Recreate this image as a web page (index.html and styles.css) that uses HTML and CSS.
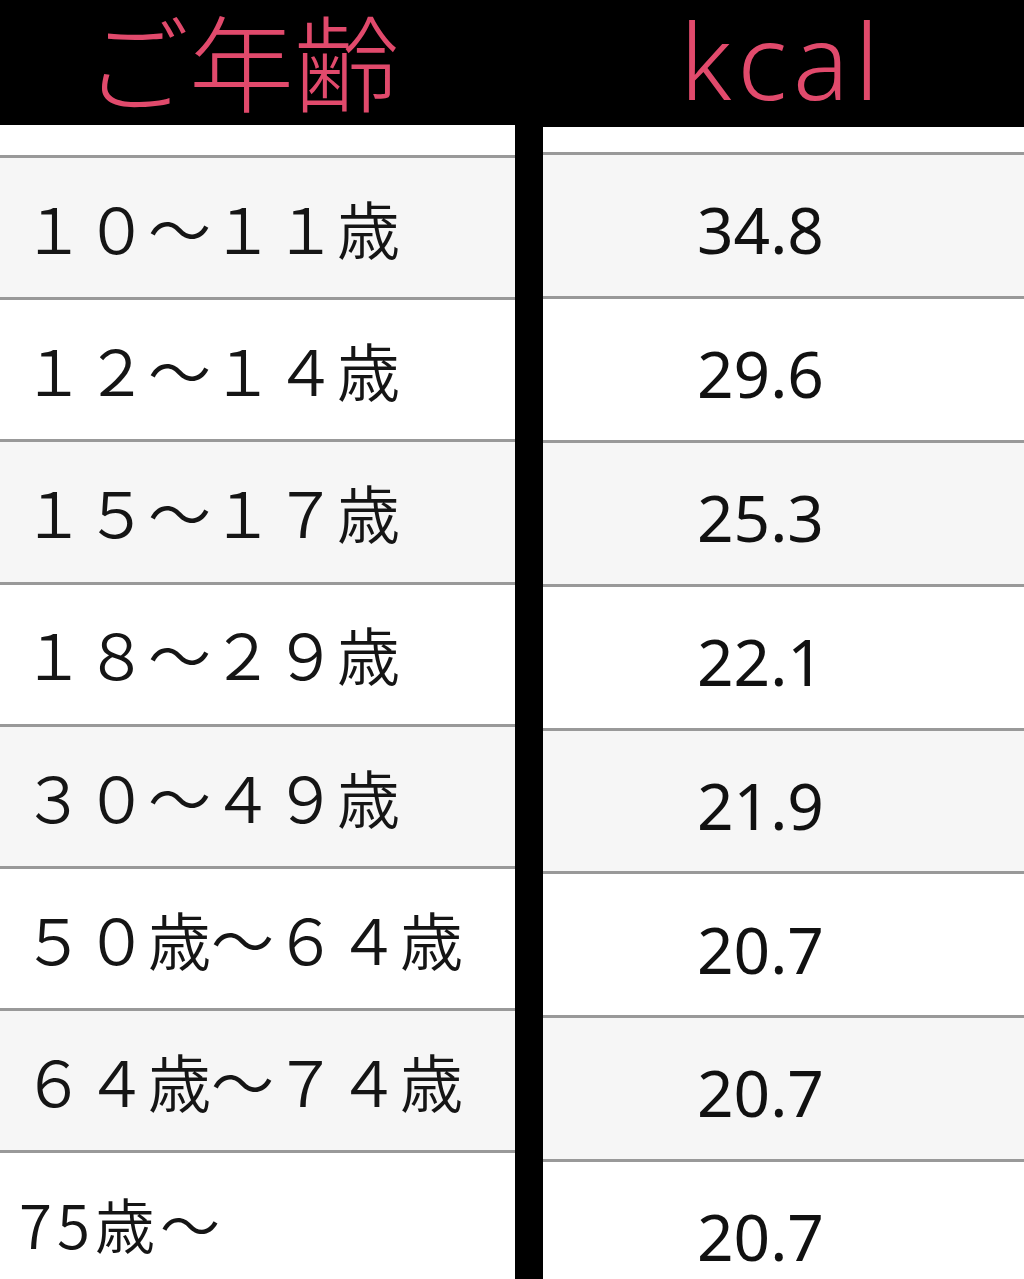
FILE: index.html
```html
<!DOCTYPE html>
<html lang="ja">
<head>
<meta charset="utf-8">
<link rel="stylesheet" href="styles.css">
</head>
<body>
<div class="table">
  <div class="col col-age">
    <div class="head"><span class="head-text jp">ご年齢</span></div>
    <div class="strip"></div>
    <div class="row alt"><span class="age">１０～１１歳</span></div>
    <div class="row"><span class="age">１２～１４歳</span></div>
    <div class="row alt"><span class="age">１５～１７歳</span></div>
    <div class="row"><span class="age">１８～２９歳</span></div>
    <div class="row alt"><span class="age">３０～４９歳</span></div>
    <div class="row"><span class="age">５０歳～６４歳</span></div>
    <div class="row alt"><span class="age">６４歳～７４歳</span></div>
    <div class="row"><span class="age small">75歳～</span></div>
  </div>
  <div class="col col-kcal">
    <div class="head"><span class="head-text en">kcal</span></div>
    <div class="strip"></div>
    <div class="row alt"><span class="num">34.8</span></div>
    <div class="row"><span class="num">29.6</span></div>
    <div class="row alt"><span class="num">25.3</span></div>
    <div class="row"><span class="num">22.1</span></div>
    <div class="row alt"><span class="num">21.9</span></div>
    <div class="row"><span class="num">20.7</span></div>
    <div class="row alt"><span class="num">20.7</span></div>
    <div class="row"><span class="num">20.7</span></div>
  </div>
</div>
</body>
</html>
```
FILE: styles.css
```css
html, body {
  margin: 0;
  padding: 0;
  background: #000;
}
body {
  width: 1024px;
  height: 1279px;
  overflow: hidden;
  font-family: "Noto Sans CJK JP", "Noto Sans", sans-serif;
}
.table {
  display: grid;
  grid-template-columns: 515px 481px;
  column-gap: 28px;
}
.col {
  display: flex;
  flex-direction: column;
}
.head {
  box-sizing: border-box;
  display: flex;
  align-items: center;
  justify-content: center;
  background: #000;
}
.col-age .head { height: 125px; padding: 0 32px 8px 0; }
.col-kcal .head { height: 127px; padding: 0 8px 6px 0; }
.head-text {
  color: #e14a6c;
  font-weight: 300;
  white-space: nowrap;
}
.head-text.jp {
  font-family: "Noto Sans CJK JP", sans-serif;
  font-size: 105px;
  line-height: 1.1;
}
.head-text.en {
  font-family: "Noto Sans", "Open Sans", sans-serif;
  font-size: 104px;
  line-height: 1.1;
  letter-spacing: 6px;
  margin-right: -6px;
}
.strip {
  background: #fff;
}
.col-age .strip { height: 30px; }
.col-kcal .strip { height: 25px; }
.row {
  box-sizing: border-box;
  border-top: 3px solid #999;
  background: #fff;
  display: flex;
  align-items: center;
  flex: none;
}
.row.alt { background: #f6f6f6; }
.col-age .row { height: 142.2px; padding-left: 22px; }
.col-kcal .row { height: 143.9px; padding-left: 154px; }
.age {
  font-family: "Noto Sans CJK JP", sans-serif;
  font-size: 63px;
  font-weight: 350;
  color: #151515;
  line-height: 1.2;
  margin-top: -2px;
}
.age.small {
  font-size: 60px;
  letter-spacing: 5px;
  margin-left: -3px;
  margin-top: 0;
}
.num {
  font-family: "Noto Sans", "Open Sans", sans-serif;
  font-size: 64px;
  color: #111;
  line-height: 1.2;
  margin-top: 10px;
}
```
